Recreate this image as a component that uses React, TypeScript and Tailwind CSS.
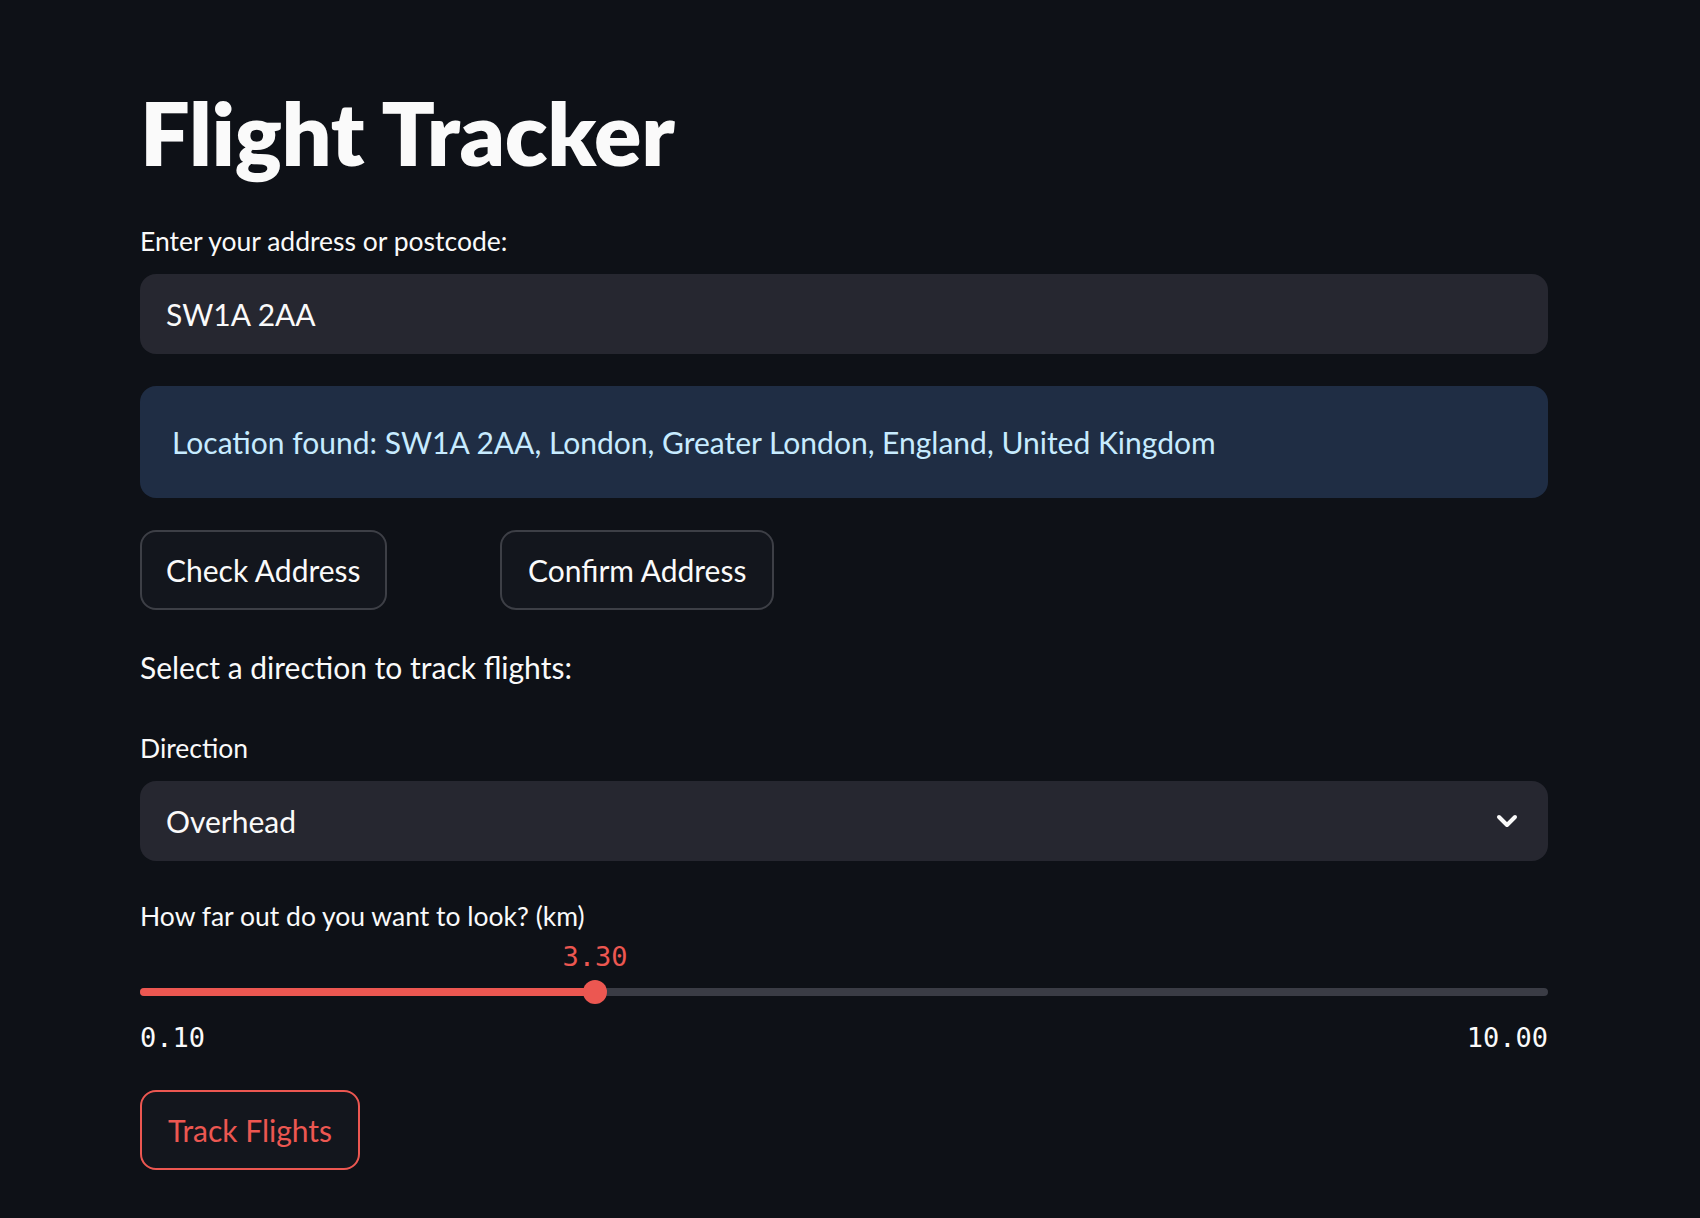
import React, { useState } from 'react'

const sans = { fontFamily: 'Lato, "Noto Sans", sans-serif' }
const mono = { fontFamily: '"DejaVu Sans Mono", "Liberation Mono", monospace' }

function Chevron() {
  return (
    <svg width="22" height="15" viewBox="0 0 22 15" fill="none">
      <polyline points="3,3 11,11 19,3" stroke="#fafafa" strokeWidth="4" strokeLinecap="round" strokeLinejoin="round" />
    </svg>
  )
}

export default function App() {
  const [address, setAddress] = useState('SW1A 2AA')
  const min = 0.1
  const max = 10
  const value = 3.3
  const pct = ((value - min) / (max - min)) * 100

  return (
    <div className="min-h-[1218px] w-full bg-[#0e1117] text-[#fafafa]" style={sans}>
      <div className="ml-[140px] w-[1408px] pt-[79px] flex flex-col">
        <h1 className="h-[106px] text-[88px] font-extrabold leading-[106px] tracking-[-0.3px]">Flight Tracker</h1>

        <label className="mt-[38px] h-[36px] text-[26.5px] leading-[36px]">Enter your address or postcode:</label>
        <div className="mt-[15px] h-[80px] rounded-[16px] bg-[#262730] flex items-center px-[26px]">
          <input
            value={address}
            onChange={(e) => setAddress(e.target.value)}
            className="w-full bg-transparent text-[30px] text-[#fafafa] outline-none"
            style={sans}
          />
        </div>

        <div className="mt-[32px] h-[112px] rounded-[16px] bg-[#1f2d44] flex items-center px-[32px]">
          <span className="text-[30px] text-[#c7ebff]">Location found: SW1A 2AA, London, Greater London, England, United Kingdom</span>
        </div>

        <div className="mt-[32px] grid grid-cols-4 gap-[32px]">
          <div>
            <button className="h-[80px] rounded-[16px] border-2 border-[#3d3f46] bg-[#13161d] px-[24px] text-[30px] text-[#fafafa]">
              Check Address
            </button>
          </div>
          <div>
            <button className="h-[80px] rounded-[16px] border-2 border-[#3d3f46] bg-[#13161d] px-[26px] text-[30px] text-[#fafafa]">
              Confirm Address
            </button>
          </div>
        </div>

        <p className="mt-[37px] h-[40px] text-[30px] leading-[40px]">Select a direction to track flights:</p>

        <label className="mt-[43px] h-[36px] text-[26.5px] leading-[36px]">Direction</label>
        <div className="mt-[15px] h-[80px] rounded-[16px] bg-[#262730] flex items-center justify-between pl-[26px] pr-[30px]">
          <span className="text-[30px]">Overhead</span>
          <Chevron />
        </div>

        <label className="mt-[37px] h-[36px] text-[26.5px] leading-[36px]">How far out do you want to look? (km)</label>

        <div className="relative mt-[4px] h-[152px]">
          <div className="absolute left-0 right-0 top-[50px] h-[8px] rounded-full bg-[#3a3c45]" />
          <div className="absolute left-0 top-[50px] h-[8px] rounded-full bg-[#ec5751]" style={{ width: `${pct}%` }} />
          <div
            className="absolute top-[42px] h-[24px] w-[24px] -ml-[12px] rounded-full bg-[#ec5751]"
            style={{ left: `${pct}%` }}
          />
          <div
            className="absolute top-[3px] -translate-x-1/2 text-[27px] leading-[32px] text-[#ec5751]"
            style={{ ...mono, left: `${pct}%` }}
          >
            3.30
          </div>
          <div className="absolute left-0 top-[84px] text-[27px] leading-[32px]" style={mono}>0.10</div>
          <div className="absolute right-0 top-[84px] text-[27px] leading-[32px]" style={mono}>10.00</div>
        </div>

        <div>
          <button className="h-[80px] rounded-[16px] border-2 border-[#ec5751] bg-[#13161d] px-[26px] text-[30px] text-[#ec5751]">
            Track Flights
          </button>
        </div>
      </div>
    </div>
  )
}
